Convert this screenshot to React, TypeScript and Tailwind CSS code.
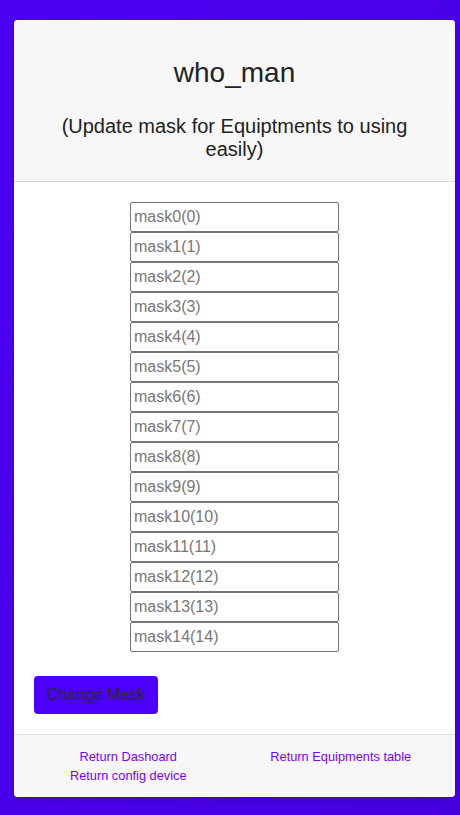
import React from 'react';

const masks = Array.from({ length: 15 }, (_, i) => `mask${i}(${i})`);

export default function App() {
  return (
    <div
      className="min-h-[815px] w-full bg-gradient-to-br from-[#4b00f2] to-[#4600e0] pl-[14px] pr-[5px] pt-[20px] pb-[18px]"
      style={{ fontFamily: '"Liberation Sans", Arial, sans-serif' }}
    >
      <div className="rounded-[4px] bg-white shadow-md overflow-hidden">
        <div className="bg-[#f7f7f7] border-b border-[#dcdcdc] h-[162px] flex flex-col items-center pt-[36px] text-[#222]">
          <h1 className="text-[28px] leading-[34px]">who_man</h1>
          <p className="mt-[25px] text-[20px] leading-[23px] text-center px-[30px]">
            (Update mask for Equiptments to using easily)
          </p>
        </div>

        <div className="px-[20px] pt-[20px] pb-[20px]">
          <div className="flex flex-col items-center">
            {masks.map((m) => (
              <input
                key={m}
                placeholder={m}
                className="w-[209px] h-[30px] border border-[#767676] rounded-[2px] px-[3px] text-[16px] text-[#333] placeholder:text-[#777] bg-white outline-none"
              />
            ))}
          </div>
          <button className="mt-[24px] h-[38px] w-[124px] rounded-[4px] bg-[#4c00ff] text-[16px] text-[#2a2a2a]">
            Change Mask
          </button>
        </div>

        <div className="bg-[#f7f7f7] border-t border-[#dcdcdc] h-[63px] px-[8px] pt-[12px] grid grid-cols-2 text-[12.8px] leading-[19px] text-[#7a00ff]">
          <div className="flex flex-col items-center">
            <a href="#">Return Dashoard</a>
            <a href="#">Return config device</a>
          </div>
          <div className="flex flex-col items-center">
            <a href="#">Return Equipments table</a>
          </div>
        </div>
      </div>
    </div>
  );
}
